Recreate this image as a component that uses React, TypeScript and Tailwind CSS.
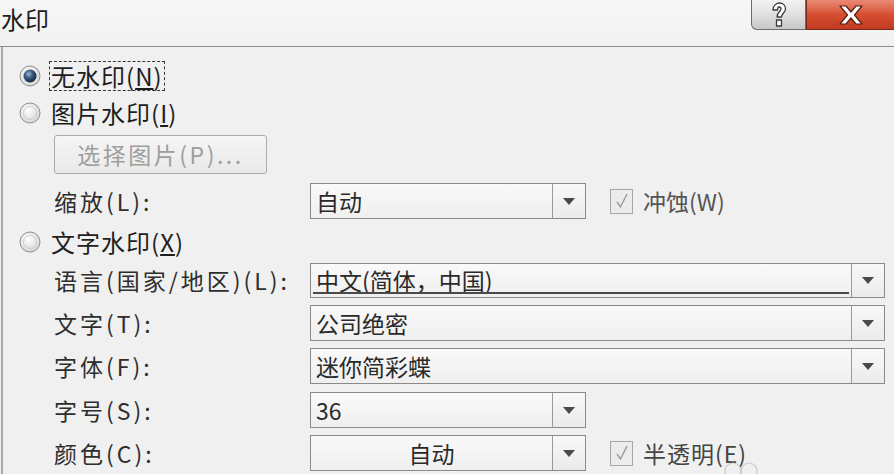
import React from 'react';

const font = { fontFamily: '"Noto Sans CJK SC", "Noto Sans", sans-serif' };

const Radio = ({ checked }: { checked?: boolean }) => (
  <svg width="22" height="22" viewBox="0 0 22 22" className="shrink-0">
    <defs>
      <radialGradient id="rOff" cx="40%" cy="35%" r="70%">
        <stop offset="0%" stopColor="#ffffff" />
        <stop offset="100%" stopColor="#d4d4d4" />
      </radialGradient>
      <radialGradient id="rOn" cx="40%" cy="35%" r="65%">
        <stop offset="0%" stopColor="#9fb6cf" />
        <stop offset="45%" stopColor="#3d5f86" />
        <stop offset="100%" stopColor="#142840" />
      </radialGradient>
    </defs>
    <circle cx="11" cy="11" r="10" fill="url(#rOff)" stroke="#8e8e8e" strokeWidth="1" />
    {checked ? (
      <circle cx="11" cy="11" r="6.5" fill="url(#rOn)" />
    ) : (
      <circle cx="11" cy="11" r="6.5" fill="none" stroke="#cfcfcf" strokeWidth="1" />
    )}
  </svg>
);

const Arrow = () => (
  <div className="w-[33px] h-full border-l border-[#9a9a9a] bg-gradient-to-b from-[#f8f8f8] to-[#ebebeb] flex items-center justify-center">
    <svg width="12" height="7" viewBox="0 0 12 7">
      <polygon points="0,0 12,0 6,7" fill="#4a4a4a" />
    </svg>
  </div>
);

const Combo = ({
  text,
  wide,
  center,
  underline,
  h,
}: {
  text: string;
  wide?: boolean;
  center?: boolean;
  underline?: boolean;
  h: string;
}) => (
  <div
    className={`${wide ? 'w-[575px]' : 'w-[276px]'} ${h} border border-[#8a8a8a] bg-gradient-to-b from-[#f9f9f9] to-[#efefef] flex items-stretch`}
  >
    <div className={`flex-1 relative flex items-center ${center ? 'justify-center' : 'pl-[5px]'} text-[23px] text-[#2a2a2a]`}>
      {text}
      {underline && <div className="absolute left-[2px] right-[2px] bottom-[3px] h-[2px] bg-[#4a4a4a]" />}
    </div>
    <Arrow />
  </div>
);

const Check = () => (
  <div className="w-[23px] h-[25px] border border-[#a6a6a6] bg-[#ececec] flex items-center justify-center shrink-0">
    <svg width="14" height="16" viewBox="0 0 14 16">
      <path d="M2 9 L5.5 14 L12 1" fill="none" stroke="#9a9a9a" strokeWidth="1.4" />
    </svg>
  </div>
);

const Label = ({ children }: { children: React.ReactNode }) => (
  <div className="w-[307px] shrink-0 pl-[51px] text-[23px] tracking-[3px] text-[#2e2e2e]">{children}</div>
);

export default function App() {
  return (
    <div className="w-[894px] h-[474px] bg-[#f0f0f0] overflow-hidden relative" style={font}>
      {/* title bar */}
      <div className="h-[47px] flex items-start justify-between bg-gradient-to-b from-[#f7f7f7] to-[#f1f1f1] border-b border-[#8c8c8c]">
        <div className="text-[24px] text-[#1c1c1c] leading-none pt-[7px] pl-[1px]">水印</div>
        <div className="flex h-[30px]">
          <div className="w-[55px] h-[30px] rounded-bl-[6px] border border-t-0 border-[#6c6c6c] bg-gradient-to-b from-[#f2f2f2] via-[#e0e0e0] to-[#c8c8c8] flex items-center justify-center">
            <svg width="20" height="26" viewBox="0 0 20 26">
              <path
                d="M4 8 C4 3 8 1 10.5 1 C14 1 16.5 3.5 16.5 7 C16.5 10.5 12.5 11.5 12.5 15 L8 15 C8 10 12 9.5 12 7 C12 6 11 5 10 5 C9 5 8.5 6 8.5 8 Z M7.5 18 L12.5 18 L12.5 24 L7.5 24 Z"
                fill="#ffffff"
                stroke="#3b3b3b"
                strokeWidth="1.3"
                strokeLinejoin="round"
              />
            </svg>
          </div>
          <div className="w-[88px] h-[30px] border-b border-l border-[#7a2a1a] bg-gradient-to-b from-[#e98a75] via-[#d64f32] to-[#c23a1f] flex items-center justify-center">
            <svg width="26" height="20" viewBox="0 0 26 20">
              <path
                d="M2 1 L8 1 L13 7 L18 1 L24 1 L16.5 10 L24 19 L18 19 L13 13 L8 19 L2 19 L9.5 10 Z"
                fill="#ffffff"
                stroke="#5a1b10"
                strokeWidth="1.2"
                strokeLinejoin="round"
              />
            </svg>
          </div>
        </div>
      </div>

      {/* body */}
      <div className="border-l-2 border-[#a9a9a9] ml-[1px] h-full flex flex-col">
        <div className="mt-[14px] h-[30px] flex items-center pl-[16px] gap-[8px]">
          <Radio checked />
          <div className="border border-dashed border-[#333] px-[1px] text-[24px] leading-[28px] tracking-[1px] text-[#1e1e1e]">无水印(<u>N</u>)</div>
        </div>
        <div className="mt-[7px] h-[30px] flex items-center pl-[16px] gap-[10px]">
          <Radio />
          <div className="text-[24px] tracking-[1px] text-[#1e1e1e]">图片水印(<u>I</u>)</div>
        </div>
        <div className="mt-[7px] h-[39px] pl-[51px]">
          <div className="w-[213px] h-full border border-[#ababab] rounded-[3px] bg-gradient-to-b from-[#f5f5f5] to-[#e9e9e9] flex items-center justify-center text-[23px] text-[#9e9e9e] tracking-[2.5px]">
            选择图片(P)...
          </div>
        </div>
        <div className="mt-[9px] h-[36px] flex items-center">
          <Label>缩放(L):</Label>
          <Combo text="自动" h="h-[36px]" />
          <div className="ml-[24px] flex items-center gap-[10px]">
            <Check />
            <span className="text-[23px] text-[#555]">冲蚀(W)</span>
          </div>
        </div>
        <div className="mt-[8px] h-[30px] flex items-center pl-[16px] gap-[10px]">
          <Radio />
          <div className="text-[24px] tracking-[1px] text-[#1e1e1e]">文字水印(<u>X</u>)</div>
        </div>
        <div className="mt-[6px] h-[35px] flex items-center">
          <Label>语言(国家/地区)(L):</Label>
          <Combo text="中文(简体，中国)" wide underline h="h-[35px]" />
        </div>
        <div className="mt-[7px] h-[36px] flex items-center">
          <Label>文字(T):</Label>
          <Combo text="公司绝密" wide h="h-[36px]" />
        </div>
        <div className="mt-[7px] h-[36px] flex items-center">
          <Label>字体(F):</Label>
          <Combo text="迷你简彩蝶" wide h="h-[36px]" />
        </div>
        <div className="mt-[8px] h-[36px] flex items-center">
          <Label>字号(S):</Label>
          <Combo text="36" h="h-[36px]" />
        </div>
        <div className="mt-[7px] h-[36px] flex items-center">
          <Label>颜色(C):</Label>
          <Combo text="自动" center h="h-[36px]" />
          <div className="ml-[24px] flex items-center gap-[10px]">
            <Check />
            <span className="text-[23px] tracking-[1px] text-[#444]">半透明(E)</span>
          </div>
        </div>
      </div>

      <svg className="absolute left-[722px] top-[460px]" width="40" height="16" viewBox="0 0 40 16">
        <circle cx="11" cy="11" r="8" fill="none" stroke="#c9c9c9" strokeWidth="1.2" />
        <circle cx="27" cy="11" r="8" fill="none" stroke="#c9c9c9" strokeWidth="1.2" />
      </svg>
    </div>
  );
}
